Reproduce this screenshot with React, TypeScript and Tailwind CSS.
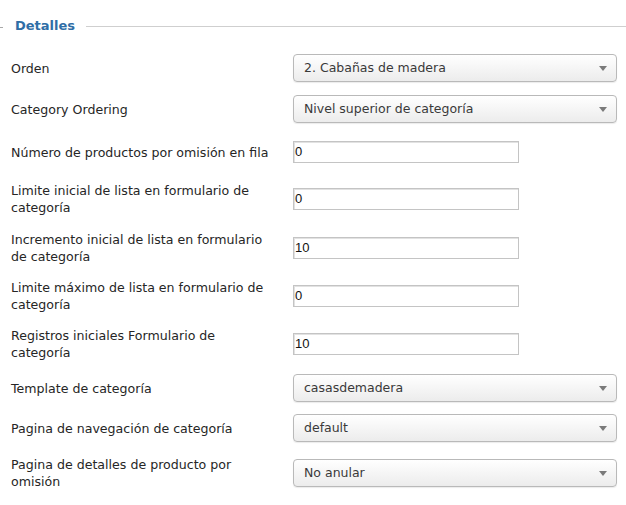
import type { ReactNode } from "react"

type Row = {
  label: string
  kind: "select" | "input"
  value: string
  gap: string
}

const rows: Row[] = [
  { label: "Orden", kind: "select", value: "2. Cabañas de madera", gap: "mt-[21px]" },
  { label: "Category Ordering", kind: "select", value: "Nivel superior de categoría", gap: "mt-[13px]" },
  { label: "Número de productos por omisión en fila", kind: "input", value: "0", gap: "mt-[18px]" },
  { label: "Limite inicial de lista en formulario de categoría", kind: "input", value: "0", gap: "mt-[19px]" },
  { label: "Incremento inicial de lista en formulario de categoría", kind: "input", value: "10", gap: "mt-[15px]" },
  { label: "Limite máximo de lista en formulario de categoría", kind: "input", value: "0", gap: "mt-[14px]" },
  { label: "Registros iniciales Formulario de categoría", kind: "input", value: "10", gap: "mt-[14px]" },
  { label: "Template de categoría", kind: "select", value: "casasdemadera", gap: "mt-[13px]" },
  { label: "Pagina de navegación de categoría", kind: "select", value: "default", gap: "mt-[12px]" },
  { label: "Pagina de detalles de producto por omisión", kind: "select", value: "No anular", gap: "mt-[14px]" },
]

function FakeSelect({ value }: { value: string }) {
  return (
    <div className="flex h-[28px] w-[324px] items-center justify-between rounded-[4px] border border-[#b9b9b9] bg-gradient-to-b from-white to-[#ececec] pl-[10px] pr-[9px] text-[12.5px] text-[#3a3a3a] shadow-[0_1px_1px_rgba(0,0,0,0.08)]">
      <span>{value}</span>
      <svg width="8" height="5" viewBox="0 0 8 5">
        <path d="M0 0h8L4 5z" fill="#7a7a7a" />
      </svg>
    </div>
  )
}

function FakeInput({ value }: { value: string }) {
  return (
    <div className="flex h-[22px] w-[226px] items-center border border-[#c4c4c4] bg-white pl-[1px] text-[13px] text-[#111] shadow-[inset_1px_1px_0_#e2e2e2]" style={{ fontFamily: '"Liberation Sans", Arial, sans-serif' }}>
      {value}
    </div>
  )
}

function FieldRow({ row }: { row: Row }) {
  let control: ReactNode
  if (row.kind === "select") {
    control = <FakeSelect value={row.value} />
  } else {
    control = <FakeInput value={row.value} />
  }

  return (
    <div className={`flex items-center ${row.gap}`}>
      <div className="w-[293px] shrink-0 pl-[11px] pr-[20px] text-[12.6px] leading-[17px] text-[#262626]">
        {row.label}
      </div>
      {control}
    </div>
  )
}

export default function App() {
  return (
    <div
      className="h-[505px] w-[626px] overflow-hidden bg-white pt-[19px]"
      style={{ fontFamily: '"DejaVu Sans", Verdana, sans-serif' }}
    >
      <div className="flex h-[14px] items-center">
        <div className="mt-[2px] h-px w-[3px] bg-[#a9a9a9]" />
        <span className="ml-[12px] text-[13px] font-bold text-[#2f6ea6]">Detalles</span>
        <div className="ml-[11px] h-px flex-1 bg-[#cfcfcf]" />
      </div>
      {rows.map((row) => (
        <FieldRow key={row.label} row={row} />
      ))}
    </div>
  )
}
